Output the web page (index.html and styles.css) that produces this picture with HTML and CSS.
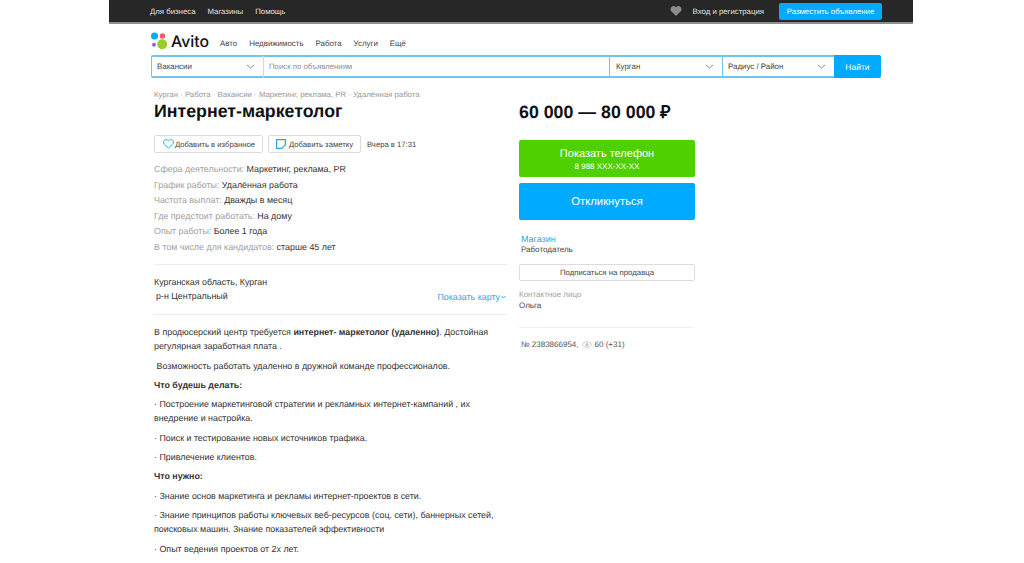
FILE: index.html
```html
<!DOCTYPE html>
<html lang="ru">
<head>
<meta charset="utf-8">
<title>Интернет-маркетолог</title>
<link rel="stylesheet" href="styles.css">
</head>
<body>
<div class="page">
  <header class="topbar">
    <nav class="top-links">
      <a>Для бизнеса</a><a>Магазины</a><a>Помощь</a>
    </nav>
    <div class="top-right">
      <svg class="top-heart" width="12" height="10" viewBox="0 0 12 11"><path fill="#8c8c8c" d="M6 11 1 6C-.4 4.500-.3 2.200 1 1 2.400-.3 4.700-.2 6 1.500 7.300-.2 9.600-.3 11 1c1.300 1.200 1.400 3.500 0 5z"/></svg>
      <a class="login">Вход и регистрация</a>
      <a class="post-btn">Разместить объявление</a>
    </div>
  </header>

  <div class="logo-row">
    <div class="logo">
      <svg width="17" height="18" viewBox="0 0 17 18">
        <circle cx="3.500" cy="4" r="3.500" fill="#0af"/>
        <circle cx="11.500" cy="4" r="2.700" fill="#f4596a"/>
        <circle cx="3" cy="12.700" r="2" fill="#965eeb"/>
        <circle cx="11.200" cy="12.200" r="5" fill="#97cf26"/>
      </svg>
      <span class="logo-text">Avito</span>
    </div>
    <nav class="cats">
      <a>Авто</a><a>Недвижимость</a><a>Работа</a><a>Услуги</a><a>Ещё</a>
    </nav>
  </div>

  <form class="search">
    <div class="field f-cat">Вакансии<svg class="chev" width="9" height="5" viewBox="0 0 9 5"><path d="M1 1l3.500 3L8 1" fill="none" stroke="#8a8a8a"/></svg></div>
    <div class="field f-query">Поиск по объявлениям</div>
    <div class="field f-city">Курган<svg class="chev" width="9" height="5" viewBox="0 0 9 5"><path d="M1 1l3.500 3L8 1" fill="none" stroke="#8a8a8a"/></svg></div>
    <div class="field f-radius">Радиус / Район<svg class="chev" width="9" height="5" viewBox="0 0 9 5"><path d="M1 1l3.500 3L8 1" fill="none" stroke="#8a8a8a"/></svg></div>
    <div class="find">Найти</div>
  </form>

  <div class="content">
    <main class="main">
      <div class="crumbs">Курган · Работа · Вакансии · Маркетинг, реклама, PR · Удалённая работа</div>
      <h1 class="title">Интернет-маркетолог</h1>
      <div class="actions">
        <a class="btn btn-fav"><svg width="11" height="10" viewBox="0 0 11 10"><path fill="none" stroke="#2ba5e8" d="M5.500 9.200 1.300 5.100C.2 4 .2 2.300 1.300 1.300 2.400.3 4.400.4 5.500 1.800 6.600.4 8.600.3 9.700 1.300c1.100 1 1.100 2.700 0 3.800z"/></svg>Добавить в избранное</a>
        <a class="btn btn-note"><svg width="10" height="10" viewBox="0 0 10 10"><path fill="#fffbe8" stroke="#2ba5e8" stroke-width="1.200" d="M.6.6h8.800v5.200L5.800 9.400H.6z"/></svg>Добавить заметку</a>
        <span class="date">Вчера в 17:31</span>
      </div>
      <ul class="params">
        <li><span>Сфера деятельности:</span> Маркетинг, реклама, PR</li>
        <li><span>График работы:</span> Удалённая работа</li>
        <li><span>Частота выплат:</span> Дважды в месяц</li>
        <li><span>Где предстоит работать:</span> На дому</li>
        <li><span>Опыт работы:</span> Более 1 года</li>
        <li><span>В том числе для кандидатов:</span> старше 45 лет</li>
      </ul>
      <div class="address">
        <div class="addr-text">
          <div>Курганская область, Курган</div>
          <div class="district">р-н Центральный</div>
        </div>
        <a class="map-link">Показать карту<svg width="5" height="4" viewBox="0 0 5 4"><path d="M.5 1l2 2 2-2" fill="none" stroke="#2ba5e8"/></svg></a>
      </div>
      <div class="desc">
        <p>В продюсерский центр требуется <b>интернет- маркетолог (удаленно)</b>. Достойная регулярная заработная плата .</p>
        <p>&nbsp;Возможность работать удаленно в дружной команде профессионалов.</p>
        <p><b>Что будешь делать:</b></p>
        <p>· Построение маркетинговой стратегии и рекламных интернет-кампаний , их внедрение и настройка.</p>
        <p>· Поиск и тестирование новых источников трафика.</p>
        <p>· Привлечение клиентов.</p>
        <p><b>Что нужно:</b></p>
        <p>· Знание основ маркетинга и рекламы интернет-проектов в сети.</p>
        <p>· Знание принципов работы ключевых веб-ресурсов (соц. сети), баннерных сетей, поисковых машин. Знание показателей эффективности</p>
        <p>· Опыт ведения проектов от 2х лет.</p>
      </div>
    </main>
    <aside class="side">
      <div class="price">60 000 — 80 000 ₽</div>
      <a class="cta cta-green"><span class="cta-main">Показать телефон</span><span class="cta-sub">8 988 XXX-XX-XX</span></a>
      <a class="cta cta-blue"><span class="cta-reply">Откликнуться</span></a>
      <div class="seller">
        <a class="seller-name">Магазин</a>
        <div class="seller-role">Работодатель</div>
      </div>
      <a class="subscribe">Подписаться на продавца</a>
      <div class="contact-label">Контактное лицо</div>
      <div class="contact-name">Ольга</div>
      <div class="item-meta">
        <span>№ 2383866954,</span>
        <svg width="10" height="7" viewBox="0 0 12 8"><path d="M.5 4C2 1.700 4 .6 6 .6S10 1.700 11.500 4C10 6.300 8 7.400 6 7.400S2 6.300 .5 4z" fill="none" stroke="#bdbdbd"/><circle cx="6" cy="4" r="1.800" fill="#bdbdbd"/></svg>
        <span>60 (+31)</span>
      </div>
    </aside>
  </div>
</div>
</body>
</html>
```
FILE: styles.css
```css
* { box-sizing: border-box; }
html, body { margin: 0; padding: 0; background: #fff; height: 563px; overflow: hidden; }
body { font-family: "Liberation Sans", Arial, sans-serif; color: #1a1a1a; font-size: 9px; text-rendering: geometricPrecision; }
a { color: inherit; text-decoration: none; }
.page { width: 804px; margin-left: 109px; }
.topbar { height: 24px; background: #272727; border-bottom: 2px solid #8f8f8f; padding: 0 31px 0 41px; display: flex; align-items: center; justify-content: space-between; color: #e4e4e4; font-size: 7.800px; }
.top-links { display: flex; gap: 12px; }
.top-right { display: flex; align-items: center; }
.top-heart { margin-right: 11px; }
.login { margin-right: 15px; }
.post-btn { width: 103px; height: 17px; background: #0af; color: #fff; border-radius: 2px; display: flex; align-items: center; justify-content: center; }
.logo-row { height: 31px; padding: 3px 0 0 42px; display: flex; align-items: center; }
.logo { display: flex; align-items: center; gap: 3px; width: 69px; }
.logo-text { font-family: "Inter", "Liberation Sans", sans-serif; font-size: 15.800px; font-weight: 500; color: #111; }
.cats { display: flex; gap: 12px; font-size: 7.900px; color: #444; margin-top: 4px; }
.search { margin-left: 42px; width: 730px; height: 23px; display: flex; background: #fff; font-size: 7.900px; color: #444; }
.field { height: 23px; border: 2px solid #6fc5f2; border-left-width: 0; border-right: 1px solid #d8d8d8; display: flex; align-items: center; justify-content: space-between; padding: 0 8px 0 5px; }
.f-cat { width: 113px; border-left: 1px solid #6fc5f2; border-radius: 2px 0 0 2px; }
.f-query { width: 346px; color: #8d8d8d; font-size: 7.800px; border-right: 1px solid #6fc5f2; }
.f-city { width: 113px; border-right: 1px solid #6fc5f2; padding-left: 6px; }
.f-radius { width: 111px; border-right: 0; }
.find { width: 47px; background: #0af; color: #fff; display: flex; align-items: center; justify-content: center; border-radius: 0 2px 2px 0; font-size: 8.500px; }
.content { display: flex; padding-left: 45px; }
.main { width: 353px; }
.crumbs { margin-top: 12px; font-size: 7.800px; line-height: 9px; color: #969696; }
.title { margin: 2px 0 0; font-size: 17.800px; line-height: 20px; font-weight: 700; color: #111; font-family: "Liberation Sans", sans-serif; }
.actions { margin-top: 14px; display: flex; align-items: center; font-size: 7.700px; color: #444; }
.btn { height: 18px; border: 1px solid #dcdcdc; border-radius: 2px; display: flex; align-items: center; gap: 1px; }
.btn-fav { width: 109px; padding-left: 8px; margin-right: 5px; }
.btn-note { width: 93px; padding-left: 7px; gap: 3px; margin-right: 6px; }
.params { list-style: none; margin: 9px 0 0; padding: 0; font-size: 8.900px; line-height: 15.500px; color: #333; }
.params span { color: #a0a0a0; }
.address { margin-top: 9px; border-top: 1px solid #ececec; border-bottom: 1px solid #ececec; height: 51px; padding-top: 10px; display: flex; justify-content: space-between; font-size: 8.900px; line-height: 14px; color: #333; }
.district { padding-left: 2px; }
.map-link { color: #2ba5e8; align-self: flex-end; margin: 0 1px 10px 0; display: flex; align-items: center; gap: 1px; }
.desc { margin-top: 10px; font-size: 8.900px; line-height: 14.300px; color: #333; }
.desc p { margin: 0 0 5px; }
.side { margin-left: 12px; width: 176px; }
.price { margin-top: 24px; font-size: 17.800px; line-height: 20px; font-weight: 700; color: #111; font-family: "Liberation Sans", sans-serif; }
.cta { display: flex; flex-direction: column; align-items: center; justify-content: center; border-radius: 2px; color: #fff; width: 100%; height: 37px; }
.cta-green { margin-top: 18px; background: #4fd000; padding-top: 2px; }
.cta-blue { margin-top: 6px; background: #0af; }
.cta-main { font-size: 11px; line-height: 13px; }
.cta-sub { font-size: 8px; line-height: 11px; }
.cta-reply { font-size: 11.300px; }
.seller { margin-top: 13px; padding-left: 2px; }
.seller-name { display: block; color: #2ba5e8; font-size: 9px; line-height: 12px; }
.seller-role { font-size: 8px; line-height: 10px; color: #444; }
.subscribe { display: flex; align-items: center; justify-content: center; margin-top: 9px; height: 17px; border: 1px solid #dcdcdc; border-radius: 2px; font-size: 7.800px; color: #444; }
.contact-label { margin-top: 8px; font-size: 8px; line-height: 11px; color: #a0a0a0; }
.contact-name { font-size: 8px; line-height: 11px; color: #444; }
.item-meta { margin-top: 16px; border-top: 1px solid #f0f0f0; padding: 11px 0 0 2px; display: flex; align-items: center; gap: 3px; font-size: 8px; line-height: 11px; color: #555; }
```
